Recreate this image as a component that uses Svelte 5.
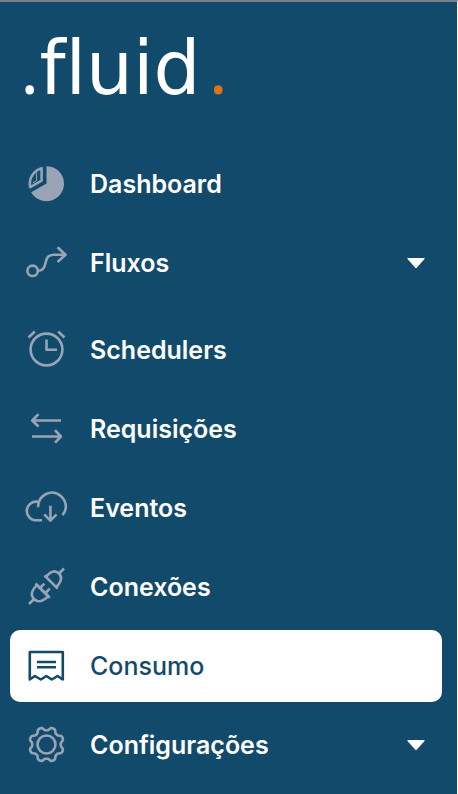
<script lang="ts">
	type Icon = 'chart' | 'flow' | 'clock' | 'arrows' | 'cloud' | 'plug' | 'receipt' | 'gear';

	interface Item {
		label: string;
		icon: Icon;
		expandable?: boolean;
	}

	const items: Item[] = [
		{ label: 'Dashboard', icon: 'chart' },
		{ label: 'Fluxos', icon: 'flow', expandable: true },
		{ label: 'Schedulers', icon: 'clock' },
		{ label: 'Requisições', icon: 'arrows' },
		{ label: 'Eventos', icon: 'cloud' },
		{ label: 'Conexões', icon: 'plug' },
		{ label: 'Consumo', icon: 'receipt' },
		{ label: 'Configurações', icon: 'gear', expandable: true }
	];

	let active = $state('Consumo');

	// outline of an eight-lobed cog around the centre of a 44px box
	function gearPath(): string {
		const points: string[] = [];
		for (let i = 0; i <= 96; i++) {
			const a = (i / 96) * Math.PI * 2;
			const wave = Math.cos(8 * (a - Math.PI / 8));
			const r = 15.8 + 1.7 * Math.tanh(1.6 * wave);
			points.push(`${(22.5 + r * Math.cos(a)).toFixed(2)} ${(21.5 + r * Math.sin(a)).toFixed(2)}`);
		}
		return `M${points.join('L')}Z`;
	}
</script>

{#snippet glyph(icon: Icon)}
	<svg class="icon" viewBox="0 0 44 44" aria-hidden="true">
		{#if icon === 'chart'}
			<path class="solid" d="M22.5 4.2A17.5 17.5 0 1 1 7.2 30.2L22.5 21.5Z" />
			<path d="M17.6 6.2V18.6L6.2 25.2C4.4 16.5 9.5 8.6 17.6 6.2Z" />
			<path d="M12.6 10.5V18.5L9 20.8" stroke-width="1" />
		{:else if icon === 'flow'}
			<circle cx="8.6" cy="29.8" r="5.2" />
			<path d="M13.8 29.8C25.5 29.8 17.5 13.8 29.5 13.8H41M33.5 6.2L41.5 13.8L33.5 21" />
		{:else if icon === 'clock'}
			<circle cx="22.5" cy="21.5" r="15.9" />
			<path d="M22.5 11.5V21.8H33M4.5 9.5L10.8 3.5M34.2 3.5L40.5 9.5" />
		{:else if icon === 'arrows'}
			<path d="M37 13.5H8.5M14.5 7.2L8.2 13.5L14.5 19.5M8 29.5H36.5M31 23.2L37 29.5L31 35.6" />
		{:else if icon === 'cloud'}
			<path d="M18 34.2H13A9.3 9.3 0 1 1 15.8 16.4M14 21.2C14 8.2 28 2.7 36.5 9.7C43.5 15.7 43 24.2 38.5 29.2" />
			<path d="M26.4 19.7V34.7M20.2 28.4L26.4 34.7L32.6 28.4" />
		{:else if icon === 'plug'}
			<path d="M5 39L10 34M10 34C6.5 30 7 26.5 12.9 20L24.3 31.2C17.5 37.5 13.5 37.5 10 34Z" />
			<path d="M11.5 18.5L25.8 32.8M16.5 22.5L20.3 18.7M22 27.5L25.8 23.7" />
			<path d="M20.5 10.5L33.7 23.7M22 11.8C27.5 5.5 31.5 5 35 8.5C38.5 12 38 16 32.3 22.2M35 8.5L40 3.5" />
		{:else if icon === 'receipt'}
			<path d="M5.8 8H38.8V35.5L33.5 32L27.8 35.5L22.3 32L16.8 35.5L10.8 32L5.8 35.5Z" />
			<path d="M13 18H32M13 23.3H32" />
		{:else if icon === 'gear'}
			<path d={gearPath()} />
			<circle cx="22.5" cy="21.5" r="9" />
		{/if}
	</svg>
{/snippet}

<aside class="sidebar">
	<div class="logo"><span class="dot">.</span>fluid<span class="dot accent">.</span></div>

	<nav>
		<ul>
			{#each items as item}
				<li class:group={item.expandable}>
					<button
						class="item"
						class:active={active === item.label}
						aria-current={active === item.label ? 'page' : undefined}
						onclick={() => (active = item.label)}
					>
						{@render glyph(item.icon)}
						<span class="label">{item.label}</span>
						{#if item.expandable}
							<svg class="caret" viewBox="0 0 18 10" aria-hidden="true">
								<path d="M0.5 0H17.5V1L9.5 10H8.5L0.5 1Z" />
							</svg>
						{/if}
					</button>
				</li>
			{/each}
		</ul>
	</nav>
</aside>

<style>
	:global(body) {
		background: #124a6b;
	}

	.sidebar {
		box-sizing: border-box;
		min-height: 100vh;
		padding: 24px 15px 0 10px;
		border-top: 2px solid #76838a;
		border-right: 1px solid #fff;
		background: #124a6b;
		font-family: Inter, 'Liberation Sans', sans-serif;
	}

	.logo {
		height: 80px;
		padding-left: 10px;
		font-family: 'DejaVu Sans', sans-serif;
		font-size: 74px;
		font-variant-ligatures: none;
		line-height: 80px;
		color: #fff;
	}

	.dot {
		font-family: 'Open Sans', 'Noto Sans', sans-serif;
	}

	.accent {
		margin-left: 8px;
		color: #dc7414;
	}

	nav {
		margin-top: 42px;
	}

	ul {
		display: flex;
		flex-direction: column;
		gap: 7px;
		margin: 0;
		padding: 0;
		list-style: none;
	}

	.group:not(:last-child) {
		padding-bottom: 8px;
	}

	.item {
		display: flex;
		align-items: center;
		gap: 22px;
		width: 100%;
		height: 72px;
		padding: 0 17px 0 14px;
		border: 0;
		border-radius: 10px;
		background: transparent;
		color: #fff;
		font: inherit;
		font-size: 25px;
		font-weight: 600;
		line-height: 32px;
		text-align: left;
		cursor: pointer;
	}

	.item.active {
		background: #fff;
		color: #124a6b;
		font-weight: 500;
	}

	.label {
		flex: 1;
	}

	.icon {
		flex: none;
		width: 44px;
		height: 44px;
		fill: none;
		stroke: #98a4b5;
		stroke-width: 2.6;
		stroke-linejoin: round;
	}

	.active .icon {
		stroke: #124a6b;
	}

	.solid {
		fill: #98a4b5;
		stroke: none;
	}

	.active .solid {
		fill: #124a6b;
	}

	.caret {
		flex: none;
		width: 18px;
		height: 10px;
		fill: #fff;
	}

	.active .caret {
		fill: #124a6b;
	}
</style>
